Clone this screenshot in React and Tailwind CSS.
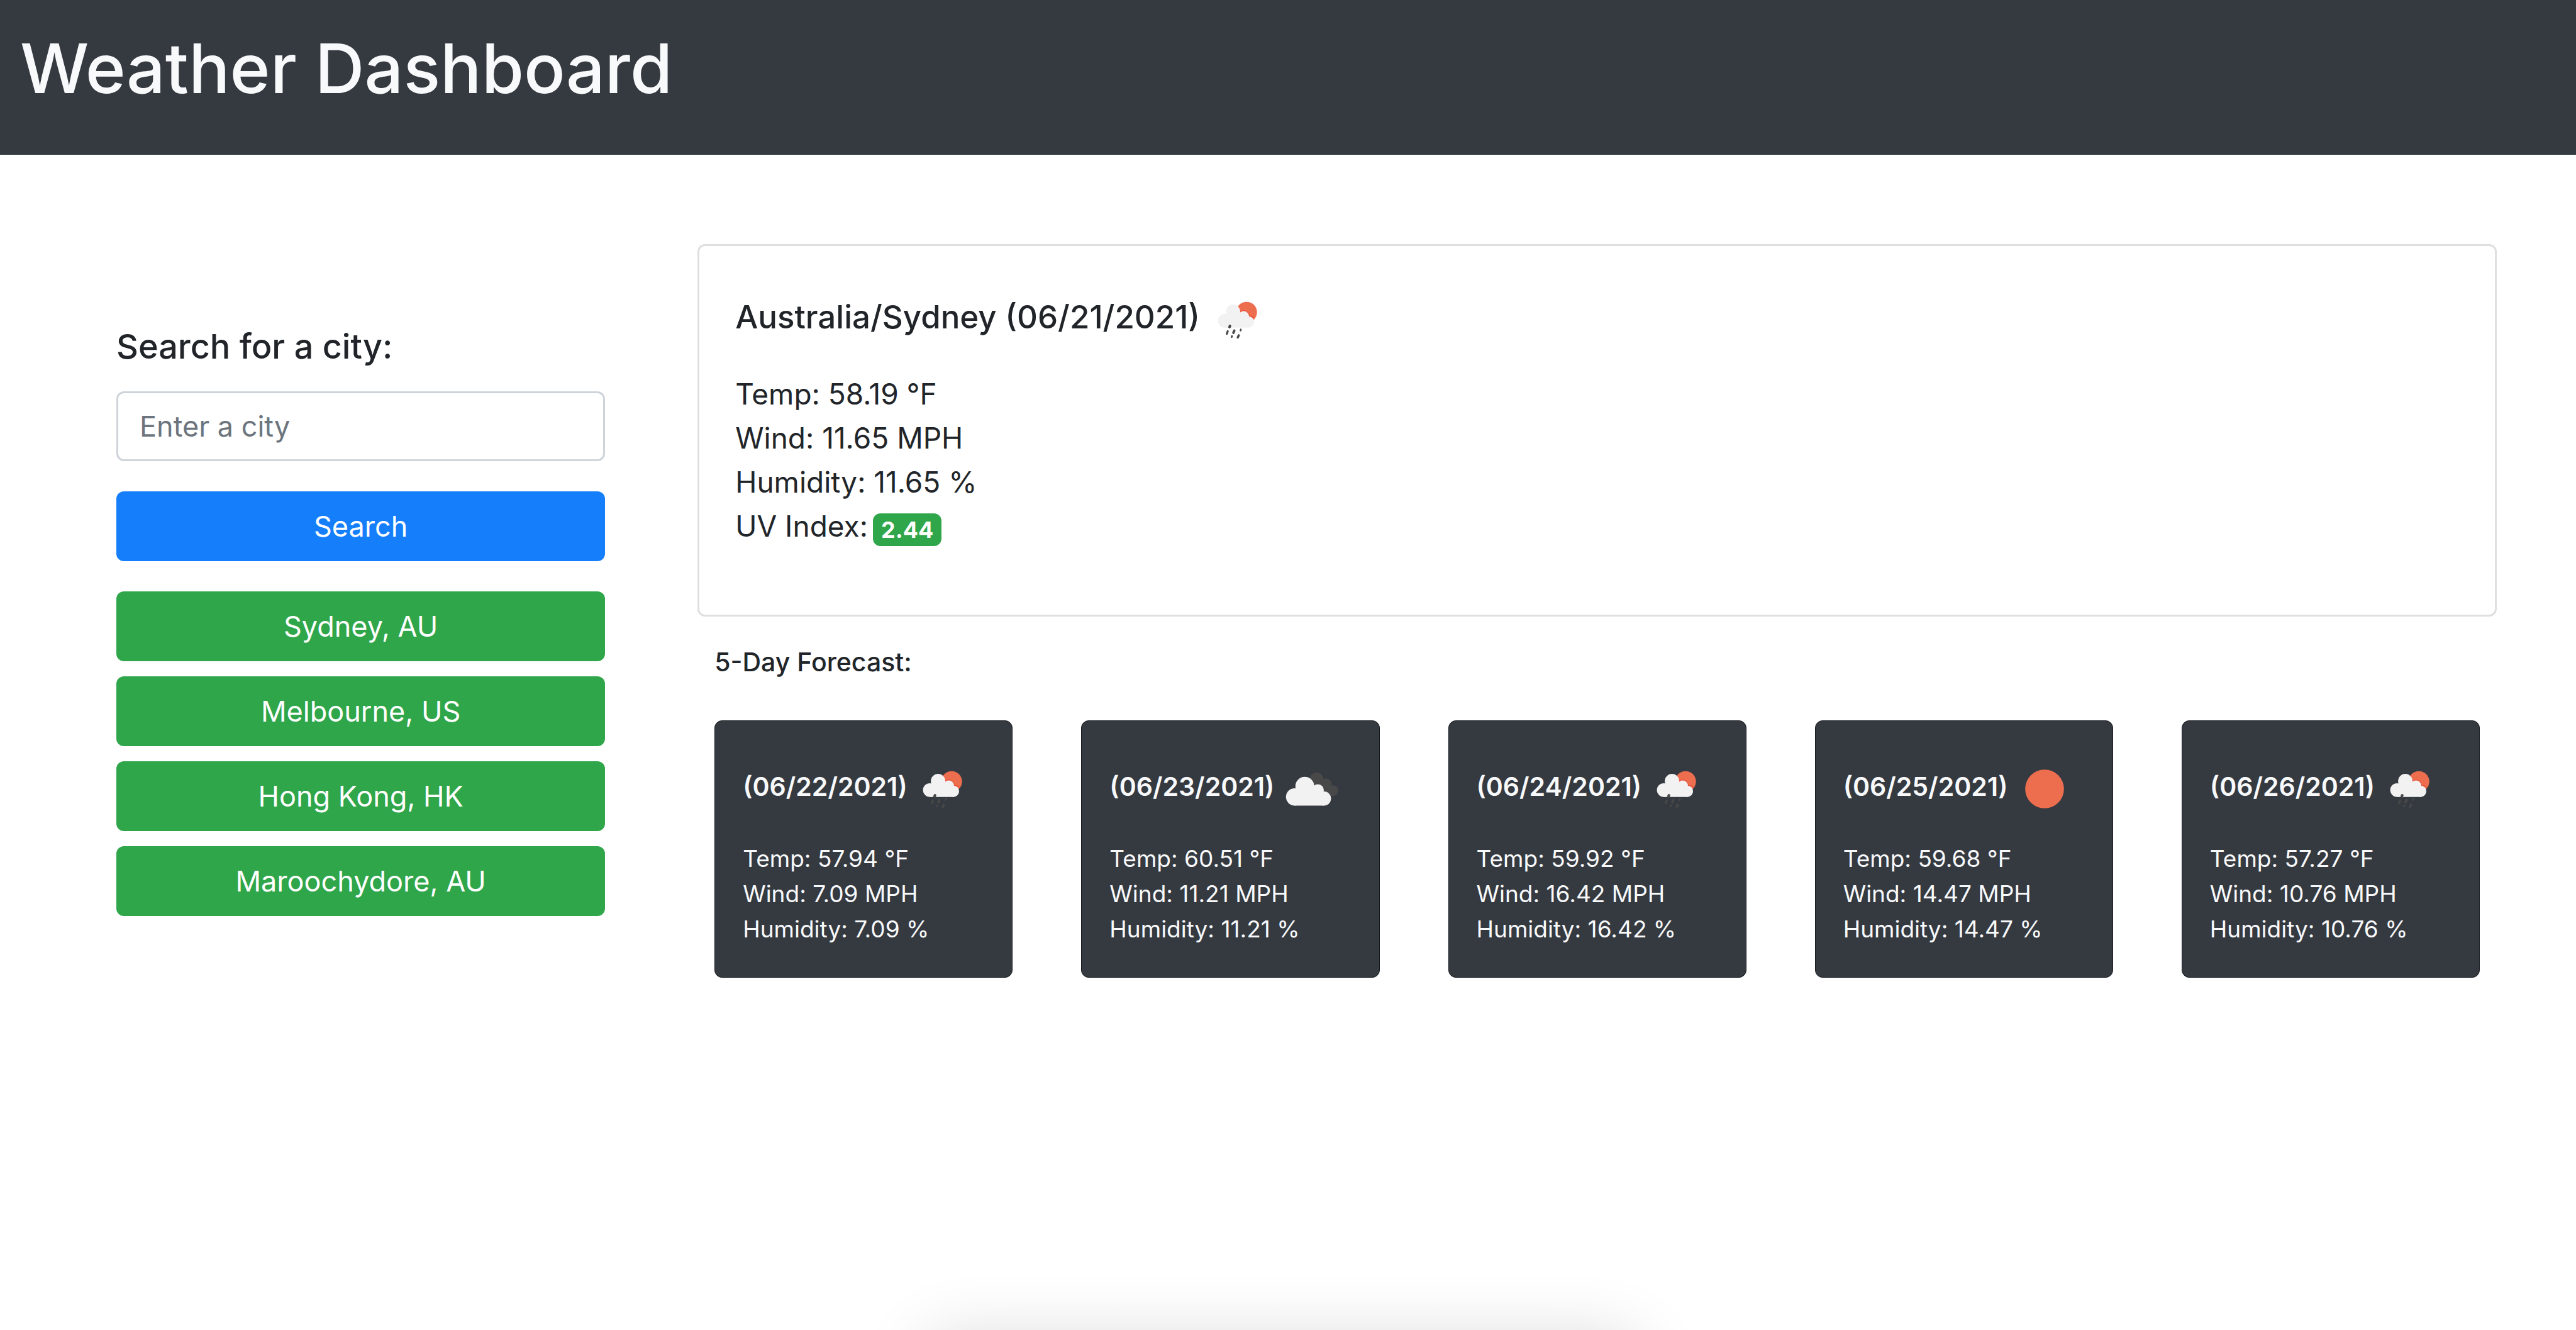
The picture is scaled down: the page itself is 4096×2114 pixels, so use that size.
import React from "react";

const cities = ["Sydney, AU", "Melbourne, US", "Hong Kong, HK", "Maroochydore, AU"];

const forecast = [
  { date: "06/22/2021", icon: "rain", temp: "57.94", wind: "7.09", humidity: "7.09" },
  { date: "06/23/2021", icon: "clouds", temp: "60.51", wind: "11.21", humidity: "11.21" },
  { date: "06/24/2021", icon: "rain", temp: "59.92", wind: "16.42", humidity: "16.42" },
  { date: "06/25/2021", icon: "sun", temp: "59.68", wind: "14.47", humidity: "14.47" },
  { date: "06/26/2021", icon: "rain", temp: "57.27", wind: "10.76", humidity: "10.76" },
];

function RainIcon() {
  return (
    <>
      <circle cx="57.6" cy="42" r="11.3" fill="#ec6e4f" />
      <path
        d="M46.8 37.4 Q49.6 39.4 49.9 42.4 Q54.6 38.8 58.4 42.4 Q60 44 59.7 46.6 Q63 46 65.4 48.6"
        fill="none"
        stroke="#ea5138"
        strokeWidth="1.6"
      />
      <g fill="#f2f2f2">
        <circle cx="42.9" cy="41.5" r="7.8" />
        <circle cx="34" cy="51.2" r="7.4" />
        <circle cx="54.4" cy="46.6" r="5.8" />
        <circle cx="59.6" cy="52.5" r="6.1" />
        <path d="M34 46 L40 42 L52 43 L60 50 V58.6 H34 Z" />
      </g>
      <g fill="none" stroke="#484848" strokeLinecap="round">
        <path d="M39.6 56.9 L39.1 58.1" strokeWidth="2.8" />
        <path d="M37.2 62.6 L36.2 65.4" strokeWidth="2.2" />
        <path d="M44.3 61.9 L43.3 64.3" strokeWidth="2.6" />
        <path d="M51.4 60.7 L51 61.9" strokeWidth="1.8" />
        <path d="M41.8 67.9 L41.5 68.8" strokeWidth="2" />
        <path d="M49.1 67 L48.1 69.3" strokeWidth="2.4" />
      </g>
    </>
  );
}

function CloudsIcon() {
  return (
    <>
      <g fill="#484848">
        <circle cx="55.8" cy="39.5" r="7.4" />
        <circle cx="66" cy="44.6" r="6" />
        <circle cx="73.5" cy="51.9" r="5.7" />
        <path d="M51 42 L60 38 L72 47 L75 57.4 H66 Z" />
      </g>
      <g fill="#f2f2f2">
        <circle cx="43" cy="47.1" r="10.2" />
        <circle cx="31.9" cy="58.7" r="9.3" />
        <circle cx="57.1" cy="51.4" r="6.5" />
        <circle cx="63.8" cy="60.4" r="7.6" />
        <path d="M32 52 L40 48 L55 48 L63.8 56 V68 H32 Z" />
      </g>
    </>
  );
}

function SunIcon() {
  return <circle cx="50" cy="50" r="21" fill="#ec6e4f" />;
}

const icons = {
  rain: { Drawing: RainIcon, label: "Rain with sun" },
  clouds: { Drawing: CloudsIcon, label: "Broken clouds" },
  sun: { Drawing: SunIcon, label: "Clear sky" },
};

function WeatherIcon({ name }) {
  const { Drawing, label } = icons[name];
  return (
    <svg viewBox="18 18 64 64" className="size-[94px] shrink-0" role="img" aria-label={label}>
      <Drawing />
    </svg>
  );
}

function ForecastCard({ day }) {
  return (
    <article className="flex-1 rounded-xl border border-[#15191d] bg-[#353a41] px-11 pt-[61px] pb-12 text-[#f8f9fa]">
      <div className="flex h-[94px] items-center gap-3">
        <h4 className="pb-2 text-[41px] leading-[48px] font-semibold whitespace-nowrap">({day.date})</h4>
        <WeatherIcon name={day.icon} />
      </div>
      <ul className="mt-9 text-[37px] leading-[56px] whitespace-nowrap">
        <li>Temp: {day.temp} °F</li>
        <li>Wind: {day.wind} MPH</li>
        <li>Humidity: {day.humidity} %</li>
      </ul>
    </article>
  );
}

export default function App() {
  return (
    <div className="relative min-h-screen overflow-hidden bg-white font-['Inter',sans-serif] text-[#212529]">
      <header className="bg-[#353a41] px-8 pt-9 pb-[66px]">
        <h1 className="text-[109px] leading-[144px] font-medium text-[#f8f9fa]">Weather Dashboard</h1>
      </header>

      <div className="grid grid-cols-[777fr_2860fr] items-start gap-[147px] pt-[142px] pr-[126px] pl-[185px]">
        <aside className="pt-[128px]">
          <form onSubmit={(e) => e.preventDefault()}>
            <label htmlFor="city" className="block text-[54px] leading-[70px] font-medium">
              Search for a city:
            </label>
            <input
              id="city"
              type="text"
              placeholder="Enter a city"
              className="mt-9 block h-[111px] w-full rounded-xl border-3 border-[#ced4da] bg-white px-[34px] text-[45px] placeholder:text-[#6c757d]"
            />
            <button
              type="submit"
              className="mt-12 block h-[111px] w-full rounded-xl bg-[#157efb] text-[45px] text-white"
            >
              Search
            </button>
          </form>
          <div className="mt-12 flex flex-col gap-6">
            {cities.map((city) => (
              <button key={city} type="button" className="h-[111px] w-full rounded-xl bg-[#30a64a] text-[45px] text-white">
                {city}
              </button>
            ))}
          </div>
        </aside>

        <main>
          <section className="rounded-xl border-3 border-[#dfdfdf] px-[57px] pt-[70px] pb-[106px]">
            <div className="flex h-[94px] items-center gap-4">
              <h2 className="pb-2 text-[51px] leading-[64px] font-medium">Australia/Sydney (06/21/2021)</h2>
              <WeatherIcon name="rain" />
            </div>
            <ul className="mt-9 text-[46px] leading-[70px]">
              <li>Temp: 58.19 °F</li>
              <li>Wind: 11.65 MPH</li>
              <li>Humidity: 11.65 %</li>
              <li className="flex items-center gap-2">
                UV Index:
                <span className="mt-3 rounded-xl bg-[#30a64a] px-[13px] text-[36px] leading-[52px] font-bold text-white">
                  2.44
                </span>
              </li>
            </ul>
          </section>

          <section className="px-[27px] pt-12">
            <h3 className="text-[41px] leading-[48px] font-medium">5-Day Forecast:</h3>
            <div className="mt-[69px] flex gap-[109px]">
              {forecast.map((day) => (
                <ForecastCard key={day.date} day={day} />
              ))}
            </div>
          </section>
        </main>
      </div>

      <div
        aria-hidden="true"
        className="absolute top-full left-[36%] mt-4 h-32 w-[27.5%] rounded-3xl shadow-[0_0_110px_rgba(0,0,0,0.16)]"
      />
    </div>
  );
}
